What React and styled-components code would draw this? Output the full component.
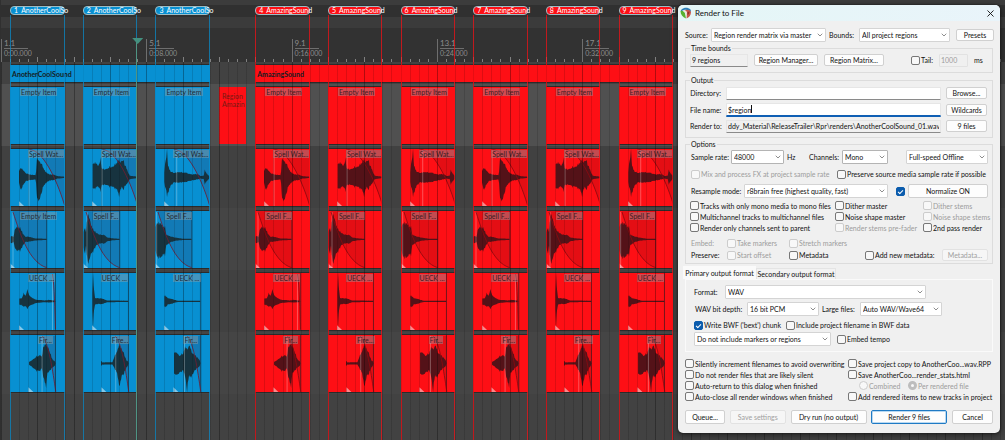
import React from 'react';
import styled, { createGlobalStyle, css } from 'styled-components';
import { FiChevronDown, FiX } from 'react-icons/fi';

const UNITS = 111;
const BLUE = '#0890d2';
const RED = '#fe0f15';

const GlobalStyle = createGlobalStyle`
  * {
    box-sizing: border-box;
  }

  body {
    margin: 0;
    background: #404040;
    font-family: Lato, 'Liberation Sans', sans-serif;
  }

  button, input, select {
    font-family: inherit;
    font-size: inherit;
    color: inherit;
    margin: 0;
  }
`;

const Page = styled.div`
  position: relative;
  min-height: 100vh;
  overflow: hidden;
  display: flex;
`;

/* ---------- timeline ---------- */

const Timeline = styled.main`
  position: relative;
  flex: 1;
  display: flex;
  flex-direction: column;
  margin-right: -4px;
  padding-left: 1px;
  font-size: 7px;
  line-height: 8px;
  background: #303030;
`;

const Lane = styled.div`
  display: grid;
  grid-template-columns: repeat(${UNITS}, minmax(0, 1fr));
  height: ${(p) => p.$height}px;
  padding-top: ${(p) => p.$top || 0}px;
  background: ${(p) => p.$bg};
`;

const Filler = styled.div`
  flex: 1;
  min-height: 46px;
  background: #424242;
`;

const Chip = styled.div`
  grid-row: 1;
  grid-column: ${(p) => p.$start} / span 6;
  display: flex;
  gap: 3px;
  height: 9px;
  padding-left: 3px;
  border: 1px solid #9cbcc4;
  border-radius: 4px;
  background: ${(p) => p.$color};
  color: #ffffff;
  line-height: 7px;
  white-space: nowrap;
`;

const TimeMark = styled.div`
  grid-row: 1;
  grid-column: ${(p) => p.$start} / span 3;
  margin-top: 11px;
  padding-left: 2px;
  border-left: 1px solid #6e6e6e;
  color: #8c8c8c;

  b {
    display: block;
    font-weight: 400;
    font-size: 8px;
    line-height: 9px;
    height: 10px;
    border-bottom: 1px solid #6e6e6e;
  }
`;

const Tick = styled.div`
  grid-row: 1;
  grid-column: ${(p) => p.$start};
  align-self: end;
  height: ${(p) => (p.$tall ? 5 : 3)}px;
  border-left: 1px solid #808080;
`;

const Band = styled.div`
  grid-row: 1;
  grid-column: ${(p) => p.$from} / ${(p) => p.$to};
  height: 17px;
  padding-left: 2px;
  background: ${(p) => p.$color};
  box-shadow: 0 -1px 0 #2b2b2b, 0 1px 0 #2b2b2b;
  color: #161c22;
  font-weight: 700;
  line-height: 18px;
`;

const Clip = styled.div`
  position: relative;
  grid-row: 1;
  grid-column: ${(p) => p.$start} / span 6;
  height: 57px;
  background: ${(p) => p.$color};
  box-shadow: 0 -1px 0 #2b2b2b, 0 1px 0 #2b2b2b;

  svg {
    display: block;
    width: 100%;
    height: 100%;
  }
`;

const ClipLabel = styled.span`
  position: absolute;
  top: 1px;
  left: ${(p) => p.$left}px;
  padding: 0 1px;
  background: rgba(150, 160, 165, 0.42);
  color: rgba(25, 20, 25, 0.85);
  white-space: nowrap;
`;

const NoteClip = styled.div`
  grid-row: 1;
  grid-column: 25 / span 3;
  height: 57px;
  padding: 5px 0 0 3px;
  background: ${RED};
  color: #7a1a14;
`;

const Overlay = styled.div`
  position: absolute;
  top: ${(p) => p.$top}px;
  bottom: 0;
  left: 1px;
  right: 0;
  display: grid;
  grid-template-columns: repeat(${UNITS}, minmax(0, 1fr));
  pointer-events: none;
`;

const GridLines = styled(Overlay)`
  background:
    repeating-linear-gradient(to right, rgba(0, 0, 0, 0.2) 0 1px, transparent 1px calc(400% / ${UNITS})),
    repeating-linear-gradient(to right, rgba(0, 0, 0, 0.13) 0 1px, transparent 1px calc(100% / ${UNITS}));
`;

const RegionEdges = styled.div`
  grid-row: 1;
  grid-column: ${(p) => p.$start} / span 6;
  border: solid ${(p) => p.$color};
  border-width: 0 1px;
  opacity: 0.7;
`;

const Playhead = styled.div`
  grid-row: 1;
  grid-column: 16;
  margin-left: -1px;
  border-left: 1px solid #4f9484;

  &::before {
    content: '';
    display: block;
    margin-left: -5px;
    width: 11px;
    height: 6px;
    background: #43907f;
    clip-path: polygon(0 0, 100% 0, 50% 100%);
  }
`;

/* ---------- dialog ---------- */

const Dialog = styled.section`
  position: absolute;
  top: 5px;
  right: 5px;
  width: 322px;
  background: #f0f0f0;
  border-radius: 5px;
  box-shadow: 0 0 2px #111, 0 2px 7px rgba(0, 0, 0, 0.5);
  color: #111111;
  font-size: 7px;
  line-height: 8px;
  overflow: hidden;
`;

const TitleBar = styled.header`
  display: flex;
  align-items: center;
  gap: 3px;
  height: 16px;
  padding: 0 4px 0 2px;
  background: linear-gradient(90deg, #e4f6f6, #e9f4fa);

  h1 {
    flex: 1;
    margin: 0;
    font-size: 8px;
    font-weight: 400;
  }
`;

const CloseButton = styled.button`
  display: flex;
  padding: 0;
  border: 0;
  background: none;
`;

const Body = styled.form`
  padding: 7px 7px 9px;
`;

const Row = styled.div`
  display: flex;
  align-items: center;
  height: ${(p) => p.$height || 14}px;
  gap: ${(p) => p.$gap || 3}px;
  margin-top: ${(p) => p.$mt || 0}px;
  padding-left: ${(p) => p.$pl || 0}px;
  white-space: nowrap;
`;

const Push = styled.span`
  flex: 1;
`;

const Group = styled.fieldset`
  margin: ${(p) => p.$mt}px 0 0;
  padding: ${(p) => p.$pad};
  min-width: 0;
  border: 1px solid #dcdcdc;

  legend {
    padding: 0 1px;
    line-height: 8px;
  }
`;

const Label = styled.label`
  flex: none;
  width: ${(p) => (p.$width ? `${p.$width}px` : 'auto')};
  text-align: ${(p) => (p.$right ? 'right' : 'left')};
  color: ${(p) => (p.$off ? '#9c9c9c' : 'inherit')};
`;

const Button = styled.button`
  flex: none;
  width: ${(p) => p.$width}px;
  height: ${(p) => p.$height || 12}px;
  padding: 0;
  border: 1px solid #d0d0d0;
  border-radius: 2px;
  background: #fdfdfd;
  white-space: nowrap;

  &:disabled {
    color: #a0a0a0;
    border-color: #e2e2e2;
    background: #f6f6f6;
  }

  ${(p) => p.$primary && css`
    border-color: #1f7ac4;
    box-shadow: inset 0 0 0 1px #b9d9f2;
  `}
`;

const TextInput = styled.input`
  flex: ${(p) => (p.$width ? 'none' : '1')};
  width: ${(p) => (p.$width ? `${p.$width}px` : 'auto')};
  min-width: 0;
  height: 13px;
  padding: 0 1px;
  border: 1px solid #e6e6e6;
  border-bottom-color: #8a8a8a;
  border-radius: 1px;
  background: ${(p) => (p.readOnly ? '#f0f0f0' : '#ffffff')};
  text-align: ${(p) => (p.$right ? 'right' : 'left')};
  outline: none;

  &:disabled {
    background: #f0f0f0;
    border-color: #e2e2e2;
    color: #9c9c9c;
  }

  ${(p) => p.$active && css`
    border-bottom: 1px solid #0f5fb4;
    box-shadow: 0 1px 0 #0f5fb4;
  `}
`;

const InputWrap = styled.span`
  position: relative;
  flex: 1;
  display: flex;
`;

const Caret = styled.i`
  position: absolute;
  left: 25px;
  top: 2px;
  width: 1px;
  height: 8px;
  background: #111;
`;

const SelectWrap = styled.span`
  position: relative;
  flex: none;
  display: flex;
  width: ${(p) => p.$width}px;

  svg {
    position: absolute;
    right: 2px;
    top: 3px;
    color: #555;
    pointer-events: none;
  }
`;

const StyledSelect = styled.select`
  appearance: none;
  width: 100%;
  height: 14px;
  padding: 0 10px 0 2px;
  border: 1px solid ${(p) => (p.$strong ? '#b4b4b4' : '#d4d4d4')};
  border-radius: 1px;
  background: #ffffff;
`;

const CheckLabel = styled.label`
  display: flex;
  align-items: center;
  gap: 1px;
  flex: none;
  width: ${(p) => (p.$width ? `${p.$width}px` : 'auto')};
  color: ${(p) => (p.$off ? '#9c9c9c' : 'inherit')};
  white-space: nowrap;
`;

const Box = styled.input`
  appearance: none;
  flex: none;
  width: 9px;
  height: 9px;
  border: 1px solid #777777;
  border-radius: ${(p) => (p.type === 'radio' ? '50%' : '2px')};
  background: #f8f8f8;

  &:disabled {
    border-color: #cccccc;
  }

  &[type='checkbox']:checked {
    border-color: #0b5cad;
    background: #0b5cad;
  }

  &[type='checkbox']:checked::after {
    content: '';
    display: block;
    width: 4px;
    height: 2px;
    margin: 2px 0 0 1px;
    border: solid #ffffff;
    border-width: 0 0 1px 1px;
    transform: rotate(-45deg);
  }

  &[type='radio']:checked {
    border: 3px solid #bdbdbd;
  }
`;

const CheckGrid = styled.div`
  display: grid;
  grid-template-columns: ${(p) => p.$cols};
  grid-auto-rows: 11px;
  margin-top: ${(p) => p.$mt || 0}px;
`;

const Tabs = styled.div`
  display: flex;
  align-items: flex-end;
  height: 13px;
  margin: 2px 0 0 -2px;
`;

const Tab = styled.button`
  height: ${(p) => (p.$active ? 13 : 11)}px;
  width: ${(p) => p.$width}px;
  padding: 0;
  border: 1px solid ${(p) => (p.$active ? '#fafafa' : '#e4e4e4')};
  border-bottom: 0;
  background: ${(p) => (p.$active ? '#fafafa' : '#f2f2f2')};
  white-space: nowrap;
`;

const TabPanel = styled.div`
  padding: 5px 8px;
  border: 1px solid #fafafa;
`;

const Footer = styled.footer`
  display: flex;
  justify-content: space-between;
  margin-top: 8px;
`;

/* ---------- data ---------- */

const regions = [
  { n: 1, start: 2 }, { n: 2, start: 10 }, { n: 3, start: 18 },
  { n: 4, start: 29 }, { n: 5, start: 37 }, { n: 6, start: 45 },
  { n: 7, start: 53 }, { n: 8, start: 61 }, { n: 9, start: 69 },
].map((r) => ({
  ...r,
  blue: r.n < 4,
  color: r.n < 4 ? BLUE : RED,
  name: r.n < 4 ? 'AnotherCoolSo' : 'AmazingSound',
}));

const timeMarks = [
  { start: 1, bar: '1.1', time: '0:00.000' },
  { start: 17, bar: '5.1', time: '0:08.000' },
  { start: 33, bar: '9.1', time: '0:16.000' },
  { start: 49, bar: '13.1', time: '0:24.000' },
  { start: 65, bar: '17.1', time: '0:32.000' },
];

// waves: [x, level above the centre line, level below it]
const tracks = [
  {
    label: ['Spell Wat...', 'Spell Wat...', 'Spell Wat...'],
    left: 18,
    fade: ['M58 2C96 2 138 85 163 168', 'V2Z'],
    tri: 27,
    light: [57, 57, 65],
    waves: [
      [[27, 24, 20], [33, 30, 42], [38, 24, 26], [48, 13, 12], [60, 8, 8], [76, 7, 7], [78, 20, 20], [81, 66, 70], [85, 60, 84], [90, 46, 64], [98, 38, 36], [106, 18, 20], [118, 9, 10], [130, 8, 8], [142, 3, 3], [163, 1, 1]],
      [[29, 44, 36], [36, 46, 36], [42, 44, 30], [45, 34, 28], [52, 62, 46], [56, 30, 26], [66, 26, 24], [80, 36, 32], [92, 34, 30], [104, 58, 48], [108, 56, 62], [116, 54, 30], [120, 58, 42], [126, 40, 28], [134, 18, 16], [140, 4, 5], [163, 1, 1]],
      [[28, 18, 16], [32, 60, 38], [36, 86, 58], [39, 36, 48], [46, 20, 30], [56, 14, 16], [74, 18, 18], [92, 14, 14], [110, 9, 10], [126, 10, 6], [138, 3, 3], [146, 5, 5], [149, 26, 24], [154, 12, 12], [163, 2, 2]],
    ],
  },
  {
    label: ['Spell F...', 'Spell F...', 'Spell F...'],
    left: 10,
    fade: ['M9 3C30 70 58 155 110 170', 'V0H9Z'],
    tri: 0,
    end: 110,
    light: [9, 12, 5],
    waves: [
      [[0, 10, 12], [7, 10, 12], [10, 6, 6], [14, 28, 24], [22, 42, 38], [32, 36, 36], [38, 18, 20], [46, 8, 8], [60, 7, 6], [76, 2, 3], [110, 1, 1]],
      [[0, 28, 30], [6, 36, 46], [9, 24, 20], [12, 66, 60], [16, 76, 74], [22, 58, 54], [30, 32, 40], [40, 20, 18], [54, 14, 12], [64, 14, 14], [72, 6, 6], [90, 2, 2], [110, 1, 1]],
      [[0, 48, 42], [8, 54, 60], [20, 46, 54], [30, 40, 50], [34, 14, 18], [46, 9, 9], [60, 5, 4], [84, 1, 1], [110, 1, 1]],
    ],
  },
  {
    label: ['UECK ...', 'UECK ...', 'UECK ...'],
    left: 18,
    tri: 27,
    end: 136,
    light: [127, null, null],
    waves: [
      [[28, 8, 10], [36, 10, 12], [41, 26, 16], [46, 18, 16], [52, 38, 24], [57, 22, 16], [68, 10, 10], [80, 4, 4], [104, 2, 2], [116, 4, 3], [136, 1, 1]],
      [[28, 30, 30], [30, 85, 76], [33, 40, 30], [36, 9, 9], [44, 10, 8], [58, 8, 8], [72, 2, 2], [136, 1, 1]],
      [[28, 18, 16], [33, 16, 18], [38, 9, 9], [48, 8, 8], [58, 4, 4], [68, 1, 1], [136, 1, 1]],
    ],
  },
  {
    label: ['Fir...', 'Fire...', 'Fir...'],
    left: 28,
    fade: ['M96 3C116 22 128 110 137 170', 'V3Z'],
    tri: 55,
    end: 136,
    light: [96, 98, 88],
    waves: [
      [[57, 4, 4], [68, 12, 14], [80, 24, 26], [90, 26, 24], [95, 20, 14], [100, 60, 50], [108, 66, 78], [112, 60, 34], [120, 34, 22], [128, 10, 12], [136, 5, 5]],
      [[54, 8, 8], [58, 2, 3], [88, 3, 3], [94, 20, 14], [102, 44, 36], [110, 64, 82], [116, 46, 40], [122, 34, 36], [130, 8, 12], [136, 5, 5]],
      [[57, 38, 36], [63, 42, 44], [72, 26, 34], [84, 34, 24], [90, 52, 40], [96, 44, 88], [102, 66, 44], [110, 38, 46], [118, 28, 24], [126, 20, 16], [136, 5, 5]],
    ],
  },
];

const noise = (i) => {
  const v = Math.sin(i * 12.9898) * 43758.5453;
  return v - Math.floor(v);
};

const wavePath = (points) => {
  const up = [];
  const down = [];
  for (let i = 0; i < points.length - 1; i++) {
    const [x0, a0, b0] = points[i];
    const [x1, a1, b1] = points[i + 1];
    for (let x = x0; x < x1; x += 2) {
      const t = (x - x0) / (x1 - x0);
      const k = 0.76 + 0.24 * noise(x);
      up.push(`${x} ${(85 - (a0 + (a1 - a0) * t) * k - 1).toFixed(1)}`);
      down.push(`${x} ${(85 + (b0 + (b1 - b0) * t) * k + 1).toFixed(1)}`);
    }
  }
  const end = points[points.length - 1][0];
  return `M${up.join('L')}L${end} 85L${down.reverse().join('L')}Z`;
};

/* ---------- pieces ---------- */

const Waveform = ({ track, variant, blue }) => {
  const light = track.light[variant];
  const line = blue ? '#6f1d33' : '#8c0a10';
  return (
    <svg viewBox="0 0 163 171" preserveAspectRatio="none" aria-hidden="true">
      {track.fade && <path d={track.fade[0] + track.fade[1]} fill={blue ? '#1b6399' : '#a80c14'} opacity={blue ? 0.5 : 0.3} />}
      <path d={wavePath(track.waves[variant])} fill={blue ? '#17333f' : '#541218'} />
      {light !== null && <path d={`M${light} 3V171`} stroke="#fff" strokeOpacity="0.35" strokeWidth="2.5" />}
      {track.end && <path d={`M${track.end} 0V171`} stroke="#16202a" strokeOpacity="0.5" strokeWidth="3" />}
      {track.fade && <path d={track.fade[0]} fill="none" stroke={line} strokeWidth="2.5" />}
      {!track.fade && variant === 0 && <path d="M127 3C133 40 134 110 136 168" fill="none" stroke={line} strokeWidth="2.5" />}
      <path d={`M${track.tri} 157L${track.tri + 15} 171H${track.tri}Z`} fill="#fff" fillOpacity="0.5" />
    </svg>
  );
};

const Logo = () => (
  <svg width="12" height="12" viewBox="0 0 24 24" aria-hidden="true">
    <path d="M3 5C8 0 16 0 21 5C22 7 22 9 21 10C17 5 9 4 2 9C1 8 2 6 3 5Z" fill="#2d7fb8" />
    <path d="M1 8C5 7 9 9 10 13L12 23C5 20 1 15 1 8Z" fill="#58b030" />
    <path d="M9 7C14 4 20 6 22 10C22 17 18 21 13 23C14 18 13 12 9 7Z" fill="#c9564a" />
    <path d="M6 8C9 6 13 7 14 11L13 20C12 15 11 11 6 8Z" fill="#efe6df" />
    <path d="M15 10L19 9L18 14L15 16Z" fill="#93302a" />
  </svg>
);

const Select = ({ id, width, value, label, strong }) => (
  <SelectWrap $width={width}>
    <StyledSelect id={id} aria-label={label} defaultValue={value} $strong={strong}>
      <option>{value}</option>
    </StyledSelect>
    <FiChevronDown size={8} />
  </SelectWrap>
);

const Check = ({ children, width, off, checked, type = 'checkbox', name }) => (
  <CheckLabel $width={width} $off={off}>
    <Box type={type} name={name} disabled={off} defaultChecked={checked} />
    {children}
  </CheckLabel>
);

const ArrangeView = () => (
  <Timeline>
    <Lane $height={5} $bg="#3c3c3c" />
    <Lane $height={12} $top={1} $bg="#303030">
      {regions.map((r) => (
        <Chip key={r.n} $start={r.start} $color={r.color}>
          <span>{r.n}</span>
          <span>{r.name}</span>
        </Chip>
      ))}
    </Lane>
    <Lane $height={11} $bg="#3b3b3b" />
    <Lane $height={34} $bg="#323232">
      {Array.from({ length: UNITS }, (_, i) => i + 1)
        .filter((s) => s % 16 !== 1)
        .map((s) => <Tick key={s} $start={s} $tall={s % 4 === 1} />)}
      {timeMarks.map((m) => (
        <TimeMark key={m.bar} $start={m.start}>
          <b>{m.bar}</b>
          {m.time}
        </TimeMark>
      ))}
    </Lane>
    <Lane $height={22} $top={3} $bg="#424242">
      <Band $from={2} $to={24} $color={BLUE}>AnotherCoolSound</Band>
      <Band $from={29} $to={75} $color={RED}>AmazingSound</Band>
    </Lane>
    <Lane $height={62} $top={3} $bg="#505050">
      {regions.map((r) => (
        <Clip key={r.n} $start={r.start} $color={r.color}>
          <ClipLabel $left={10}>Empty Item</ClipLabel>
        </Clip>
      ))}
      <NoteClip>Region<br />Amazin</NoteClip>
    </Lane>
    {tracks.map((track, t) => (
      <Lane key={track.label[0]} $height={62} $top={3} $bg={t % 2 ? '#454545' : '#414141'}>
        {regions.map((r) => (
          <Clip key={r.n} $start={r.start} $color={r.color}>
            <Waveform track={track} variant={(r.n - 1) % 3} blue={r.blue} />
            <ClipLabel $left={track.left}>
              {t === 1 && r.n === 1 ? 'Empty Item' : track.label[(r.n - 1) % 3]}
            </ClipLabel>
          </Clip>
        ))}
      </Lane>
    ))}
    <Filler />
    <GridLines $top={62} />
    <Overlay $top={15}>
      {regions.map((r) => <RegionEdges key={r.n} $start={r.start} $color={r.color} />)}
    </Overlay>
    <Overlay $top={38}>
      <Playhead />
    </Overlay>
  </Timeline>
);

const RenderDialog = () => (
  <Dialog role="dialog" aria-labelledby="render-title">
    <TitleBar>
      <Logo />
      <h1 id="render-title">Render to File</h1>
      <CloseButton aria-label="Close"><FiX size={11} /></CloseButton>
    </TitleBar>
    <Body onSubmit={(e) => e.preventDefault()}>
      <Row>
        <Label htmlFor="source" $width={23}>Source:</Label>
        <Select id="source" width={115} value="Region render matrix via master" />
        <Label htmlFor="bounds" $width={27}>Bounds:</Label>
        <Select id="bounds" width={91} value="All project regions" />
        <Push />
        <Button type="button" $width={38}>Presets</Button>
      </Row>

      <Group $mt={2} $pad="1px 5px 5px 4px">
        <legend>Time bounds</legend>
        <Row $gap={6}>
          <TextInput aria-label="Time bounds" readOnly value="9 regions" $width={58} />
          <Button type="button" $width={64}>Region Manager...</Button>
          <Button type="button" $width={60}>Region Matrix...</Button>
          <Push />
          <Check>Tail:</Check>
          <TextInput aria-label="Tail length" disabled value="1000" $width={29} />
          <Label $width={13}>ms</Label>
        </Row>
      </Group>

      <Group $mt={3} $pad="1px 5px 3px 4px">
        <legend>Output</legend>
        <Row $height={16} $gap={5}>
          <Label htmlFor="dir" $width={31} $right>Directory:</Label>
          <TextInput id="dir" defaultValue="" />
          <Button type="button" $width={41}>Browse...</Button>
        </Row>
        <Row $height={17} $gap={5}>
          <Label htmlFor="file" $width={31} $right>File name:</Label>
          <InputWrap>
            <TextInput id="file" defaultValue="$region" $active />
            <Caret />
          </InputWrap>
          <Button type="button" $width={41}>Wildcards</Button>
        </Row>
        <Row $height={16} $gap={5}>
          <Label htmlFor="target" $width={31} $right>Render to:</Label>
          <TextInput id="target" readOnly $right value="ddy_Material\ReleaseTrailer\Rpr\renders\AnotherCoolSound_01.wav" />
          <Button type="button" $width={41}>9 files</Button>
        </Row>
      </Group>

      <Group $mt={2} $pad="2px 4px 2px 4px">
        <legend>Options</legend>
        <Row $pl={1}>
          <Label htmlFor="rate" $width={37}>Sample rate:</Label>
          <Select id="rate" width={53} value="48000" strong />
          <Label $width={19}>Hz</Label>
          <Label htmlFor="channels" $width={30}>Channels:</Label>
          <Select id="channels" width={46} value="Mono" strong />
          <Push />
          <Select label="Render speed" width={82} value="Full-speed Offline" />
        </Row>
        <Row $mt={3} $pl={1}>
          <Check off width={143}>Mix and process FX at project sample rate</Check>
          <Check>Preserve source media sample rate if possible</Check>
        </Row>
        <Row $mt={3} $pl={1}>
          <Label htmlFor="resample" $width={50}>Resample mode:</Label>
          <Select id="resample" width={144} value="r8brain free (highest quality, fast)" />
          <Push />
          <Box type="checkbox" defaultChecked aria-label="Normalize" />
          <Button type="button" $width={80} $height={14}>Normalize ON</Button>
        </Row>
        <CheckGrid $cols="145px 88px 1fr" $mt={2}>
          <Check>Tracks with only mono media to mono files</Check>
          <Check>Dither master</Check>
          <Check off>Dither stems</Check>
          <Check>Multichannel tracks to multichannel files</Check>
          <Check>Noise shape master</Check>
          <Check off>Noise shape stems</Check>
          <Check>Render only channels sent to parent</Check>
          <Check off>Render stems pre-fader</Check>
          <Check>2nd pass render</Check>
        </CheckGrid>
        <Row $height={12} $mt={4} $gap={1} $pl={1}>
          <Label $off $width={35}>Embed:</Label>
          <Check off width={61}>Take markers</Check>
          <Check off>Stretch markers</Check>
        </Row>
        <Row $height={12} $gap={1} $pl={1}>
          <Label $width={35}>Preserve:</Label>
          <Check off width={61}>Start offset</Check>
          <Check width={75}>Metadata</Check>
          <Check>Add new metadata:</Check>
          <Push />
          <Button type="button" disabled $width={46}>Metadata...</Button>
        </Row>
      </Group>

      <Tabs role="tablist">
        <Tab type="button" role="tab" aria-selected="true" $active $width={73}>Primary output format</Tab>
        <Tab type="button" role="tab" aria-selected="false" $width={80}>Secondary output format</Tab>
      </Tabs>
      <TabPanel role="tabpanel">
        <Row>
          <Label htmlFor="format" $width={28}>Format:</Label>
          <Select id="format" width={201} value="WAV" />
        </Row>
        <Row $mt={3} $pl={1}>
          <Label htmlFor="depth" $width={49}>WAV bit depth:</Label>
          <Select id="depth" width={72} value="16 bit PCM" />
          <Label htmlFor="large" $width={35}>Large files:</Label>
          <Select id="large" width={82} value="Auto WAV/Wave64" />
        </Row>
        <Row $mt={2}>
          <Check checked width={89}>Write BWF ('bext') chunk</Check>
          <Check>Include project filename in BWF data</Check>
        </Row>
        <Row $gap={6}>
          <Select label="Markers" width={137} value="Do not include markers or regions" />
          <Check>Embed tempo</Check>
        </Row>
      </TabPanel>

      <CheckGrid $cols="163px 1fr" $mt={6}>
        <Check>Silently increment filenames to avoid overwriting</Check>
        <Check>Save project copy to AnotherCoo...wav.RPP</Check>
        <Check>Do not render files that are likely silent</Check>
        <Check>Save AnotherCoo...render_stats.html</Check>
        <Check>Auto-return to this dialog when finished</Check>
        <Row $height={11} $pl={11} $gap={2}>
          <Check type="radio" name="stats" off width={47}>Combined</Check>
          <Check type="radio" name="stats" off checked>Per rendered file</Check>
        </Row>
        <Check>Auto-close all render windows when finished</Check>
        <Check>Add rendered items to new tracks in project</Check>
      </CheckGrid>

      <Footer>
        <Button type="button" $width={40} $height={14}>Queue...</Button>
        <Button type="button" $width={56} $height={14} disabled>Save settings</Button>
        <Button type="button" $width={76} $height={14}>Dry run (no output)</Button>
        <Button type="submit" $width={76} $height={14} $primary>Render 9 files</Button>
        <Button type="button" $width={41} $height={14}>Cancel</Button>
      </Footer>
    </Body>
  </Dialog>
);

const App = () => (
  <Page>
    <GlobalStyle />
    <ArrangeView />
    <RenderDialog />
  </Page>
);

export default App;
